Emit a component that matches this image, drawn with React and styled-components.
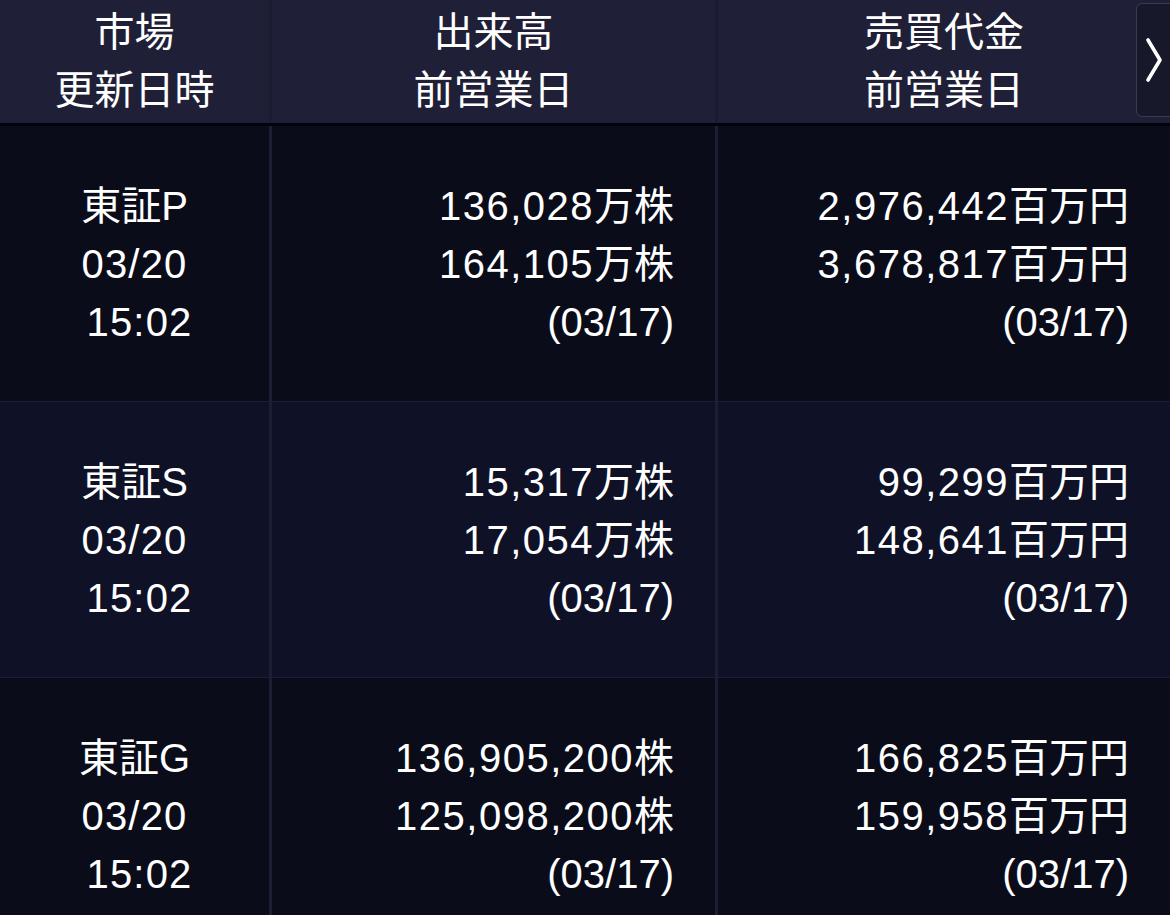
import React from 'react';
import styled, { createGlobalStyle } from 'styled-components';

const GlobalStyle = createGlobalStyle`
  html, body {
    margin: 0;
    padding: 0;
    background: #0a0c1a;
  }
  body {
    font-family: "Liberation Sans", "Noto Sans CJK JP", sans-serif;
    color: #ffffff;
  }
`;

const Table = styled.div`
  width: 1170px;
  height: 915px;
  overflow: hidden;
  background: #0a0c1a;
`;

const Header = styled.div`
  position: relative;
  display: grid;
  grid-template-columns: 269px 446px 1fr;
  height: 123px;
  background: #1f2037;
  border-bottom: 3px solid #03040a;
`;

const HeadCell = styled.div`
  display: flex;
  flex-direction: column;
  align-items: center;
  font-family: "Noto Sans CJK JP", sans-serif;
  font-size: 40px;
  line-height: 58px;
  border-left: ${(p) => (p.$first ? 'none' : '3px solid #1b1c31')};
`;

const NextButton = styled.button`
  position: absolute;
  top: 3px;
  right: -8px;
  width: 42px;
  height: 114px;
  padding: 0 6px 0 0;
  display: flex;
  align-items: center;
  justify-content: center;
  background: #17182a;
  border: 1px solid #3b3c52;
  border-radius: 6px;
  cursor: pointer;
`;

const Row = styled.div`
  display: grid;
  grid-template-columns: 269px 446px 1fr;
  height: 275px;
  background: ${(p) => (p.$alt ? '#0f1227' : '#0a0c1a')};
  border-bottom: 1px solid #1c1e36;
`;

const Cell = styled.div`
  display: flex;
  flex-direction: column;
  align-items: ${(p) => (p.$align === 'center' ? 'center' : 'flex-end')};
  padding: 48px ${(p) => (p.$align === 'center' ? '0' : '41px')} 0 0;
  font-size: 40px;
  white-space: nowrap;
  border-left: ${(p) => (p.$first ? 'none' : '3px solid #1c1e36')};
`;

// Latin-only lines sit a little higher than lines that mix in CJK glyphs
const Line = styled.div`
  box-sizing: border-box;
  height: 58px;
  line-height: 58px;
  padding-top: ${(p) => (p.$latin ? '3px' : '0')};
  padding-left: ${(p) => p.$indent || 0}px;
  letter-spacing: ${(p) => (p.$wide ? '1.2px' : '0')};
`;

const Num = styled.span`
  letter-spacing: 1.5px;
`;

const Unit = styled.span`
  font-family: "Noto Sans CJK JP", sans-serif;
  letter-spacing: 0;
`;

const rows = [
  {
    market: '東証',
    code: 'P',
    vol: ['136,028', '164,105'],
    volUnit: '万株',
    amt: ['2,976,442', '3,678,817'],
  },
  {
    market: '東証',
    code: 'S',
    vol: ['15,317', '17,054'],
    volUnit: '万株',
    amt: ['99,299', '148,641'],
  },
  {
    market: '東証',
    code: 'G',
    vol: ['136,905,200', '125,098,200'],
    volUnit: '株',
    amt: ['166,825', '159,958'],
  },
];

const Chevron = () => (
  <svg width="20" height="48" viewBox="0 0 20 48">
    <path
      d="M4 4 L16 24 L4 44"
      fill="none"
      stroke="#ffffff"
      strokeWidth="3.6"
      strokeLinecap="round"
      strokeLinejoin="round"
    />
  </svg>
);

export default function App() {
  return (
    <>
      <GlobalStyle />
      <Table>
        <Header>
          <HeadCell $first>
            <div>市場</div>
            <div>更新日時</div>
          </HeadCell>
          <HeadCell>
            <div>出来高</div>
            <div>前営業日</div>
          </HeadCell>
          <HeadCell>
            <div>売買代金</div>
            <div>前営業日</div>
          </HeadCell>
          <NextButton aria-label="次へ">
            <Chevron />
          </NextButton>
        </Header>
        {rows.map((r, i) => (
          <Row key={r.code} $alt={i % 2 === 1}>
            <Cell $first $align="center">
              <Line>
                <Unit>{r.market}</Unit>
                {r.code}
              </Line>
              <Line $latin $wide>03/20</Line>
              <Line $latin $wide $indent={10}>15:02</Line>
            </Cell>
            <Cell>
              {r.vol.map((v) => (
                <Line key={v}>
                  <Num>{v}</Num>
                  <Unit>{r.volUnit}</Unit>
                </Line>
              ))}
              <Line $latin>(03/17)</Line>
            </Cell>
            <Cell>
              {r.amt.map((v) => (
                <Line key={v}>
                  <Num>{v}</Num>
                  <Unit>百万円</Unit>
                </Line>
              ))}
              <Line $latin>(03/17)</Line>
            </Cell>
          </Row>
        ))}
      </Table>
    </>
  );
}
